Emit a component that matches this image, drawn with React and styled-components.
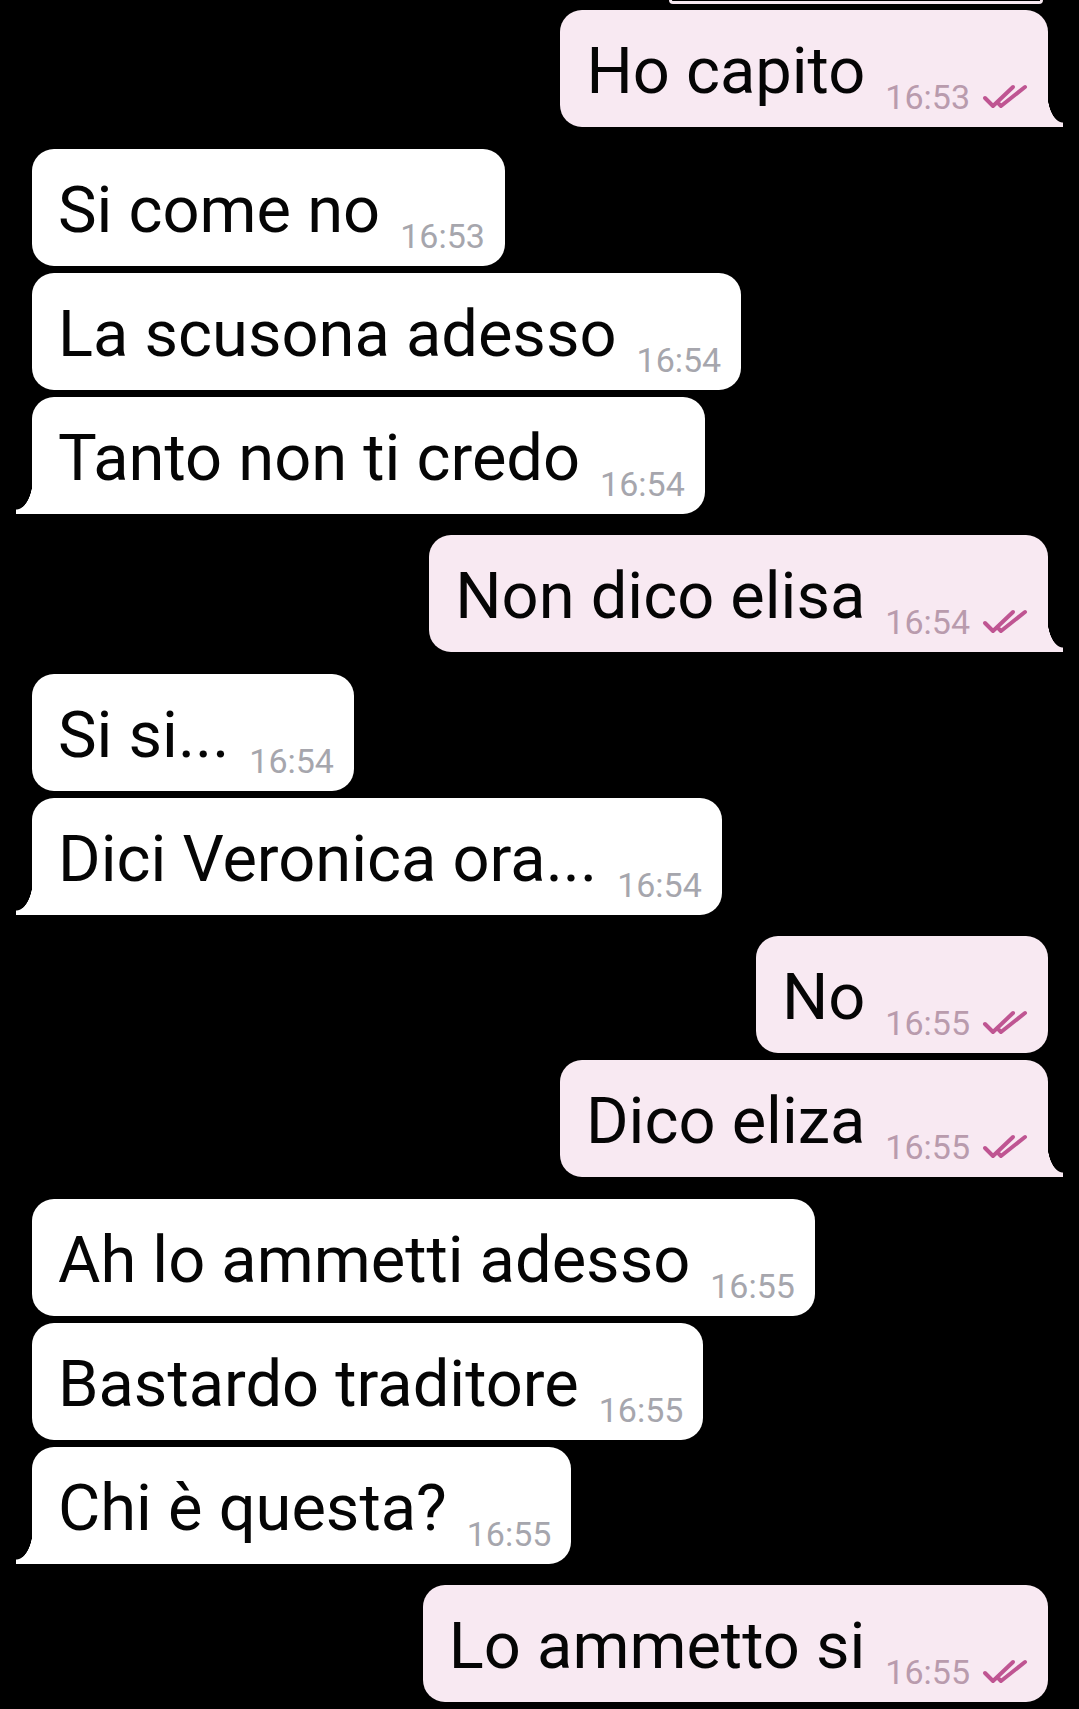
import React from "react";
import styled, { createGlobalStyle, css } from "styled-components";

const Global = createGlobalStyle`
  html, body { margin: 0; padding: 0; background: #000; }
  body { font-family: Roboto, "Noto Sans", "Liberation Sans", sans-serif; }
`;

const OUT_BG = "#f8e9f2";
const IN_BG = "#ffffff";

const Chat = styled.div`
  display: flex;
  flex-direction: column;
  width: 1079px;
  height: 1709px;
  overflow: hidden;
  background: #000;
`;

const PrevEdge = styled.div`
  align-self: flex-end;
  margin-right: 36px;
  width: 374px;
  height: 4px;
  box-sizing: border-box;
  background: #000;
  border: 3px solid #f6e8f0;
  border-top: none;
  border-radius: 0 0 20px 20px;
`;

const Row = styled.div`
  display: flex;
  justify-content: ${(p) => (p.$out ? "flex-end" : "flex-start")};
  padding: ${(p) => (p.$out ? "0 31px 0 0" : "0 0 0 32px")};
  margin-top: ${(p) => p.$gap}px;
`;

const tailOut = css`
  border-bottom-right-radius: 0;
  &::after {
    content: "";
    position: absolute;
    right: -15px;
    bottom: 0;
    width: 16px;
    height: 36px;
    background: radial-gradient(ellipse 16px 32px at 100% 0, transparent 97%, ${OUT_BG} 100%);
  }
`;

const tailIn = css`
  border-bottom-left-radius: 0;
  &::after {
    content: "";
    position: absolute;
    left: -16px;
    bottom: 0;
    width: 17px;
    height: 36px;
    background: radial-gradient(ellipse 17px 32px at 0 0, transparent 97%, ${IN_BG} 100%);
  }
`;

const Bubble = styled.div`
  position: relative;
  display: flex;
  align-items: flex-end;
  box-sizing: border-box;
  height: 117px;
  padding: 24px 20px 19px 26px;
  border-radius: 22px;
  background: ${(p) => (p.$out ? OUT_BG : IN_BG)};
  ${(p) => p.$tail && (p.$out ? tailOut : tailIn)}
`;

const Text = styled.span`
  font-size: 65px;
  line-height: 74px;
  color: #050505;
  white-space: nowrap;
  margin-right: 20px;
`;

const Meta = styled.span`
  display: flex;
  align-items: center;
  gap: 12px;
  margin-bottom: -5px;
  font-size: 34px;
  line-height: 32px;
  color: ${(p) => (p.$out ? "#b99bad" : "#a6a6ad")};
  white-space: nowrap;
`;

const Ticks = () => (
  <svg width="46" height="26" viewBox="0 0 46 26" fill="none">
    <path d="M3 14 L11 22 L31 3" stroke="#bf5592" strokeWidth="4" strokeLinecap="round" strokeLinejoin="round" />
    <path d="M17 20 L19 22 L43 3" stroke="#bf5592" strokeWidth="4" strokeLinecap="round" strokeLinejoin="round" />
  </svg>
);

const messages = [
  { out: true, text: "Ho capito", time: "16:53", tail: true },
  { out: false, text: "Si come no", time: "16:53" },
  { out: false, text: "La scusona adesso", time: "16:54" },
  { out: false, text: "Tanto non ti credo", time: "16:54", tail: true },
  { out: true, text: "Non dico elisa", time: "16:54", tail: true },
  { out: false, text: "Si si...", time: "16:54" },
  { out: false, text: "Dici Veronica ora...", time: "16:54", tail: true },
  { out: true, text: "No", time: "16:55" },
  { out: true, text: "Dico eliza", time: "16:55", tail: true },
  { out: false, text: "Ah lo ammetti adesso", time: "16:55" },
  { out: false, text: "Bastardo traditore", time: "16:55" },
  { out: false, text: "Chi è questa?", time: "16:55", tail: true },
  { out: true, text: "Lo ammetto si", time: "16:55" },
];

export default function App() {
  return (
    <>
      <Global />
      <Chat>
        <PrevEdge />
        {messages.map((m, i) => {
          const gap = i === 0 ? 6 : messages[i - 1].out === m.out ? 7 : 21.5;
          return (
            <Row key={i} $out={m.out} $gap={gap}>
              <Bubble $out={m.out} $tail={m.tail}>
                <Text>{m.text}</Text>
                <Meta $out={m.out}>
                  {m.time}
                  {m.out && <Ticks />}
                </Meta>
              </Bubble>
            </Row>
          );
        })}
      </Chat>
    </>
  );
}
